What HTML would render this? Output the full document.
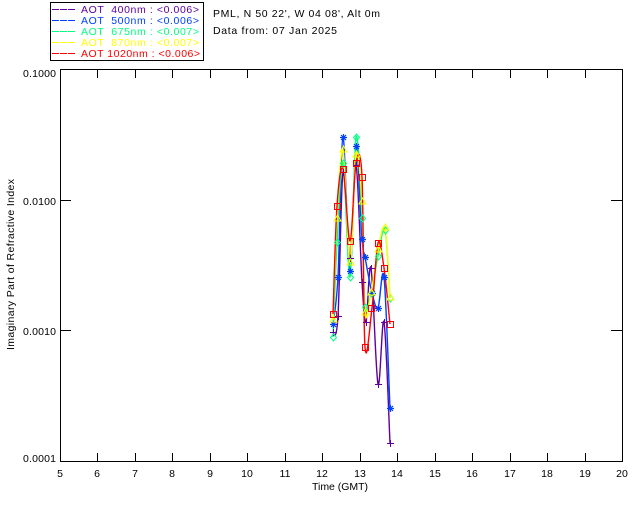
<!DOCTYPE html>
<html><head><meta charset="utf-8"><style>
html,body{margin:0;padding:0;background:#fff;width:640px;height:512px;overflow:hidden}
svg{display:block}
text{font-family:"Liberation Sans",sans-serif;font-size:10.5px;fill:#000;white-space:pre}
.l path{fill:none;stroke-width:1.4;stroke-linejoin:round}
</style></head><body>
<svg width="640" height="512" viewBox="0 0 640 512" xmlns="http://www.w3.org/2000/svg">
<rect width="640" height="512" fill="#fff"/>
<rect x="50.5" y="2.5" width="153" height="58" fill="none" stroke="#000" stroke-width="1"/>
<g stroke-width="1" stroke-dasharray="7 1" shape-rendering="crispEdges">
<line x1="52" x2="75" y1="9.5" y2="9.5" stroke="#6000a0"/>
<line x1="52" x2="75" y1="20.5" y2="20.5" stroke="#0040ff"/>
<line x1="52" x2="75" y1="31.5" y2="31.5" stroke="#00ff80"/>
<line x1="52" x2="75" y1="42.5" y2="42.5" stroke="#ffff00"/>
<line x1="52" x2="75" y1="53.5" y2="53.5" stroke="#ff0000"/>
</g>
<text x="81" y="13" textLength="118" style="fill:#6000a0">AOT  400nm : &lt;0.006&gt;</text>
<text x="81" y="24" textLength="118" style="fill:#0040ff">AOT  500nm : &lt;0.006&gt;</text>
<text x="81" y="35" textLength="118" style="fill:#00ff80">AOT  675nm : &lt;0.007&gt;</text>
<text x="81" y="46" textLength="118" style="fill:#ffff00">AOT  870nm : &lt;0.007&gt;</text>
<text x="81" y="57" textLength="119" style="fill:#ff0000">AOT 1020nm : &lt;0.006&gt;</text>
<text x="213" y="17" textLength="167">PML, N 50 22', W 04 08', Alt 0m</text>
<text x="213" y="34" textLength="124">Data from: 07 Jan 2025</text>

<g stroke="#000" stroke-width="1" fill="none" shape-rendering="crispEdges">
<rect x="60.5" y="69.5" width="562" height="392"/>
<path d="M97.5 70v8M135.5 70v8M172.5 70v8M210.5 70v8M247.5 70v8M285.5 70v8M322.5 70v8M360.5 70v8M397.5 70v8M435.5 70v8M472.5 70v8M510.5 70v8M547.5 70v8M585.5 70v8"/>
<path d="M97.5 461v-8M135.5 461v-8M172.5 461v-8M210.5 461v-8M247.5 461v-8M285.5 461v-8M322.5 461v-8M360.5 461v-8M397.5 461v-8M435.5 461v-8M472.5 461v-8M510.5 461v-8M547.5 461v-8M585.5 461v-8"/>
<path d="M60 200.5h11M60 330.5h11M622 200.5h-11M622 330.5h-11"/>
</g>
<g text-anchor="end">
<text x="56" y="77" textLength="33">0.1000</text>
<text x="56" y="205" textLength="33">0.0100</text>
<text x="56" y="335" textLength="33">0.0010</text>
<text x="56" y="462" textLength="33">0.0001</text>
</g>
<g text-anchor="middle">
<text x="60" y="477">5</text><text x="97" y="477">6</text><text x="135" y="477">7</text><text x="172" y="477">8</text><text x="210" y="477">9</text><text x="247" y="477">10</text><text x="285" y="477">11</text><text x="322" y="477">12</text><text x="360" y="477">13</text><text x="397" y="477">14</text><text x="435" y="477">15</text><text x="472" y="477">16</text><text x="510" y="477">17</text><text x="547" y="477">18</text><text x="585" y="477">19</text><text x="622" y="477">20</text>
</g>
<text x="312" y="490" textLength="56">Time (GMT)</text>
<text transform="translate(14 350) rotate(-90)" textLength="171">Imaginary Part of Refractive Index</text>

<g class="l">
<path stroke="#6000a0" d="M333,332 C333.8,334.7 336.3,342.7 338,316 C339.7,289.3 341,181.7 343,172 C345,162.3 347.8,259.2 350,258 C352.2,256.8 354,161 356,165 C358,169 360.3,255.8 362,282 C363.7,308.2 364.5,324.3 366,322 C367.5,319.7 369,257.7 371,268 C373,278.3 375.8,375 378,384 C380.2,393 382,312.2 384,322 C386,331.8 389,422.8 390,443"/>
<path stroke="#0040ff" d="M333,324 C333.8,316.2 336.3,308.2 338,277 C339.7,245.8 341,138 343,137 C345,136 347.8,269.5 350,271 C352.2,272.5 354,151.3 356,146 C358,140.7 360.5,220.5 362,239 C363.5,257.5 363.3,248 365,257 C366.7,266 369.8,284.5 372,293 C374.2,301.5 376,310.7 378,308 C380,305.3 382,260.3 384,277 C386,293.7 389,386.2 390,408"/>
<path stroke="#00ff80" d="M333,337 C333.7,321.2 335.3,271 337,242 C338.7,213 340.8,157.2 343,163 C345.2,168.8 347.8,281.3 350,277 C352.2,272.7 354,146.8 356,137 C358,127.2 360.5,189.7 362,218 C363.5,246.3 363.5,294.5 365,307 C366.5,319.5 368.8,301.5 371,293 C373.2,284.5 375.7,266.5 378,256 C380.3,245.5 383,223 385,230 C387,237 389.2,286.7 390,298"/>
<path stroke="#ffff00" d="M333,320 C333.7,303.2 335.3,247.3 337,219 C338.7,190.7 340.8,142.7 343,150 C345.2,157.3 347.8,262.2 350,263 C352.2,263.8 354,165.2 356,155 C358,144.8 360.5,175.7 362,202 C363.5,228.3 363.5,297.8 365,313 C366.5,328.2 368.8,303.5 371,293 C373.2,282.5 375.7,260.8 378,250 C380.3,239.2 383,220 385,228 C387,236 389.2,286.3 390,298"/>
<path stroke="#ff0000" d="M333,314 C333.7,296 335.3,230.2 337,206 C338.7,181.8 340.8,163.2 343,169 C345.2,174.8 347.8,242 350,241 C352.2,240 354,173.7 356,163 C358,152.3 360.5,146.3 362,177 C363.5,207.7 363.3,325.2 365,347 C366.7,368.8 369.8,325.3 372,308 C374.2,290.7 376,249.7 378,243 C380,236.3 382,254.5 384,268 C386,281.5 389,314.7 390,324"/>
</g>

<g fill="none" stroke="#6000a0" stroke-width="1" shape-rendering="crispEdges">
<path d="M330 332.5h7M333.5 329v7M335 316.5h7M338.5 313v7M340 172.5h7M343.5 169v7M347 258.5h7M350.5 255v7M353 165.5h7M356.5 162v7M359 282.5h7M362.5 279v7M363 322.5h7M366.5 319v7M368 268.5h7M371.5 265v7M375 384.5h7M378.5 381v7M381 322.5h7M384.5 319v7M387 443.5h7M390.5 440v7"/>
</g>
<g fill="none" stroke="#0040ff" stroke-width="1.2">
<path d="M330 324.5h7M333.5 321v7M331 322l5 5M336 322l-5 5M335 277.5h7M338.5 274v7M336 275l5 5M341 275l-5 5M340 137.5h7M343.5 134v7M341 135l5 5M346 135l-5 5M347 271.5h7M350.5 268v7M348 269l5 5M353 269l-5 5M353 146.5h7M356.5 143v7M354 144l5 5M359 144l-5 5M359 239.5h7M362.5 236v7M360 237l5 5M365 237l-5 5M362 257.5h7M365.5 254v7M363 255l5 5M368 255l-5 5M369 293.5h7M372.5 290v7M370 291l5 5M375 291l-5 5M375 308.5h7M378.5 305v7M376 306l5 5M381 306l-5 5M381 277.5h7M384.5 274v7M382 275l5 5M387 275l-5 5M387 408.5h7M390.5 405v7M388 406l5 5M393 406l-5 5"/>
</g>
<g fill="none" stroke="#00ff80" stroke-width="1">
<path d="M333.5 334l3 3.5-3 3.5-3-3.5zM337.5 239l3 3.5-3 3.5-3-3.5zM343.5 160l3 3.5-3 3.5-3-3.5zM350.5 274l3 3.5-3 3.5-3-3.5zM356.5 134l3 3.5-3 3.5-3-3.5zM362.5 215l3 3.5-3 3.5-3-3.5zM365.5 304l3 3.5-3 3.5-3-3.5zM371.5 290l3 3.5-3 3.5-3-3.5zM378.5 253l3 3.5-3 3.5-3-3.5zM385.5 227l3 3.5-3 3.5-3-3.5zM390.5 295l3 3.5-3 3.5-3-3.5z"/>
</g>
<g fill="none" stroke="#ffff00" stroke-width="1">
<path d="M333.5 316l3.5 6h-7zM337.5 215l3.5 6h-7zM343.5 146l3.5 6h-7zM350.5 259l3.5 6h-7zM356.5 151l3.5 6h-7zM362.5 198l3.5 6h-7zM365.5 309l3.5 6h-7zM371.5 289l3.5 6h-7zM378.5 246l3.5 6h-7zM385.5 224l3.5 6h-7zM390.5 294l3.5 6h-7z"/>
</g>
<g fill="none" stroke="#ff0000" stroke-width="1" shape-rendering="crispEdges">
<rect x="330.5" y="311.5" width="6" height="6"/><rect x="334.5" y="203.5" width="6" height="6"/><rect x="340.5" y="166.5" width="6" height="6"/><rect x="347.5" y="238.5" width="6" height="6"/><rect x="353.5" y="160.5" width="6" height="6"/><rect x="359.5" y="174.5" width="6" height="6"/><rect x="362.5" y="344.5" width="6" height="6"/><rect x="368.5" y="305.5" width="6" height="6"/><rect x="375.5" y="240.5" width="6" height="6"/><rect x="381.5" y="265.5" width="6" height="6"/><rect x="387.5" y="321.5" width="6" height="6"/>
</g>
</svg>
</body></html>
